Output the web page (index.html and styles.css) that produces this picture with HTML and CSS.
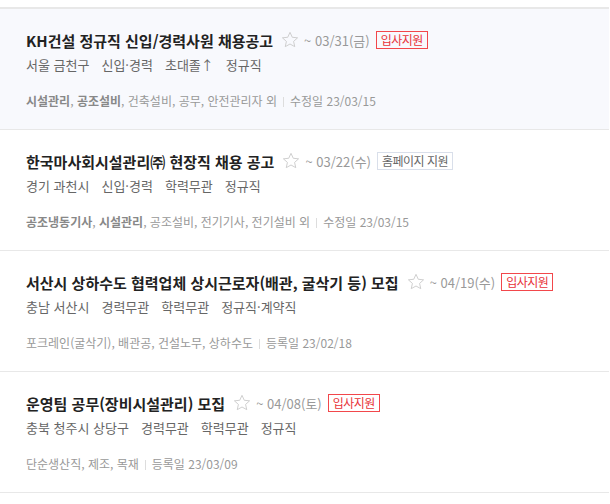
FILE: index.html
```html
<!DOCTYPE html>
<html lang="ko">
<head>
  <meta charset="UTF-8">
  <title>채용공고 목록</title>
  <link rel="stylesheet" href="styles.css">
</head>
<body>
  <ul class="job-list">
    <li class="job on">
      <div class="job-tit">
        <a class="name">KH건설 정규직 신입/경력사원 채용공고</a>
        <svg class="star" viewBox="0 0 24 24"><path d="M12 2.8l2.7 5.9 6.4.7-4.8 4.3 1.4 6.3L12 16.8 6.3 20l1.4-6.3-4.8-4.3 6.4-.7z"/></svg>
        <span class="date">~ 03/31(금)</span>
        <span class="badge red">입사지원</span>
      </div>
      <div class="job-meta">
        <span>서울 금천구</span>
        <span>신입·경력</span>
        <span>초대졸↑</span>
        <span>정규직</span>
      </div>
      <p class="job-sector">
        <b>시설관리</b>, <b>공조설비</b>, 건축설비, 공무, 안전관리자 외<span class="bar"></span>수정일 23/03/15
      </p>
    </li>
    <li class="job">
      <div class="job-tit">
        <a class="name">한국마사회시설관리㈜ 현장직 채용 공고</a>
        <svg class="star" viewBox="0 0 24 24"><path d="M12 2.8l2.7 5.9 6.4.7-4.8 4.3 1.4 6.3L12 16.8 6.3 20l1.4-6.3-4.8-4.3 6.4-.7z"/></svg>
        <span class="date">~ 03/22(수)</span>
        <span class="badge gray">홈페이지 지원</span>
      </div>
      <div class="job-meta">
        <span>경기 과천시</span>
        <span>신입·경력</span>
        <span>학력무관</span>
        <span>정규직</span>
      </div>
      <p class="job-sector">
        <b>공조냉동기사</b>, <b>시설관리</b>, 공조설비, 전기기사, 전기설비 외<span class="bar"></span>수정일 23/03/15
      </p>
    </li>
    <li class="job">
      <div class="job-tit">
        <a class="name">서산시 상하수도 협력업체 상시근로자(배관, 굴삭기 등) 모집</a>
        <svg class="star" viewBox="0 0 24 24"><path d="M12 2.8l2.7 5.9 6.4.7-4.8 4.3 1.4 6.3L12 16.8 6.3 20l1.4-6.3-4.8-4.3 6.4-.7z"/></svg>
        <span class="date">~ 04/19(수)</span>
        <span class="badge red">입사지원</span>
      </div>
      <div class="job-meta">
        <span>충남 서산시</span>
        <span>경력무관</span>
        <span>학력무관</span>
        <span>정규직·계약직</span>
      </div>
      <p class="job-sector">
        포크레인(굴삭기), 배관공, 건설노무, 상하수도<span class="bar"></span>등록일 23/02/18
      </p>
    </li>
    <li class="job">
      <div class="job-tit">
        <a class="name">운영팀 공무(장비시설관리) 모집</a>
        <svg class="star" viewBox="0 0 24 24"><path d="M12 2.8l2.7 5.9 6.4.7-4.8 4.3 1.4 6.3L12 16.8 6.3 20l1.4-6.3-4.8-4.3 6.4-.7z"/></svg>
        <span class="date">~ 04/08(토)</span>
        <span class="badge red">입사지원</span>
      </div>
      <div class="job-meta">
        <span>충북 청주시 상당구</span>
        <span>경력무관</span>
        <span>학력무관</span>
        <span>정규직</span>
      </div>
      <p class="job-sector">
        단순생산직, 제조, 목재<span class="bar"></span>등록일 23/03/09
      </p>
    </li>
  </ul>
</body>
</html>
```

FILE: styles.css
```css
body {
  margin: 0;
  padding-top: 7px;
  background-color: #fff;
  font-family: "Noto Sans CJK KR", "Noto Sans", sans-serif;
}
.job-list {
  width: 609px;
  margin: 0;
  padding: 0;
  list-style: none;
  border-top: 2px solid #e8e8e8;
}
.job {
  padding: 20px 26px 19px;
  border-bottom: 1px solid #e8e8e8;
}
.job.on {
  background-color: #f8f9fd;
}
.job-tit {
  display: flex;
  align-items: center;
  height: 22px;
}
.name {
  font-size: 15px;
  font-weight: bold;
  color: #222;
}
.star {
  width: 20px;
  height: 20px;
  margin: 0 4px 0 7px;
  fill: none;
  stroke: #cbcbcb;
  stroke-width: 1.1;
  stroke-linejoin: round;
}
.date {
  font-size: 13px;
  color: #999;
}
.badge {
  margin-left: 6px;
  height: 16px;
  line-height: 16px;
  padding: 0 4px;
  font-size: 12px;
  letter-spacing: -0.5px;
}
.badge.red {
  border: 1px solid #f2474b;
  color: #e8333a;
}
.badge.gray {
  border: 1px solid #d9dfea;
  color: #666;
}
.job-meta {
  display: flex;
  gap: 12px;
  margin-top: 4px;
  line-height: 20px;
  font-size: 13px;
  color: #666;
}
.job-sector {
  margin: 17px 0 0;
  line-height: 18px;
  font-size: 12px;
  color: #999;
}
.job-sector b {
  color: #888;
}
.bar {
  display: inline-block;
  width: 1px;
  height: 10px;
  margin: 0 6px;
  vertical-align: -1px;
  background-color: #ddd;
}
```
